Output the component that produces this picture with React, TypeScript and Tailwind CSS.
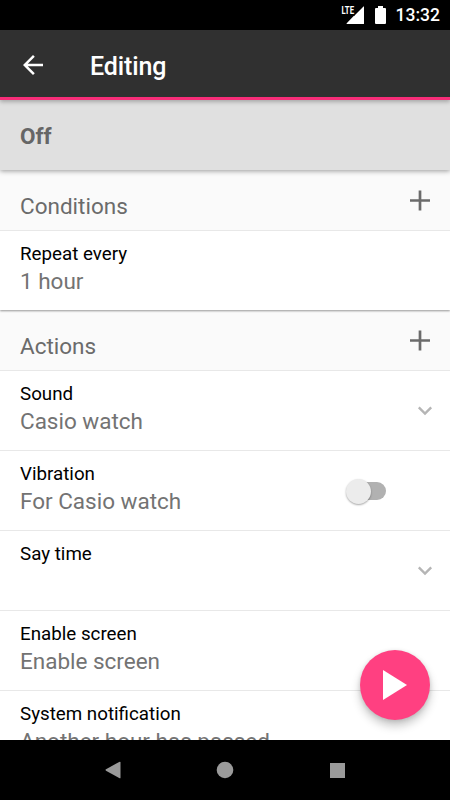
import type { ReactNode } from "react";

type RowProps = {
  title: string;
  summary?: string;
  children?: ReactNode;
};

const NOTIFICATION_TEXT = "Another hour has passed";

function StatusBar() {
  return (
    <div className="flex h-[30px] shrink-0 items-center justify-end bg-black pr-[10px] text-white">
      <svg width="25" height="20" viewBox="0 0 25 20" fill="currentColor">
        <path d="M14 10.500V10l8.500-8.500q.5-.5.5.5v16.500q0 .5-.5.5H6q-1 0-.3-.7l7-7.300z" />
        <text
          x="0.5"
          y="9"
          textLength="12.5"
          lengthAdjust="spacingAndGlyphs"
          className="font-['Roboto'] text-[11.5px] font-bold"
        >
          LTE
        </text>
      </svg>
      <svg
        className="ml-[9px]"
        width="11"
        height="20"
        viewBox="0 0 11 20"
        fill="currentColor"
      >
        <path d="M3 1h5v2h2q1 0 1 1v14q0 1-1 1H1q-1 0-1-1V4q0-1 1-1h2z" />
      </svg>
      <span className="ml-[10px] pt-px text-[17.5px] leading-[29px] font-medium">
        13:32
      </span>
    </div>
  );
}

function Toolbar() {
  return (
    <header className="relative z-20 flex h-[70px] shrink-0 items-center border-b-[3px] border-[#f72d78] bg-[#303030] pt-[3px] pl-[17.5px] text-white shadow-[0_2px_4px_rgba(0,0,0,0.25)]">
      <svg width="30" height="30" viewBox="0 0 24 24" fill="currentColor">
        <path d="M20 11H7.83l5.59-5.59L12 4l-8 8 8 8 1.41-1.41L7.83 13H20z" />
      </svg>
      <h1 className="ml-[42.5px] pt-[3px] text-[25px] leading-[30px] font-medium tracking-[-0.1px]">
        Editing
      </h1>
    </header>
  );
}

function SectionHeader({ title }: { title: string }) {
  return (
    <div className="flex h-[60px] items-center justify-between bg-[#fafafa] px-5">
      <h2 className="pt-3 text-[22.5px] leading-[27px] text-[#6b6b6b]">
        {title}
      </h2>
      <svg
        width="20"
        height="21"
        viewBox="0 0 20 21"
        className="text-[#6b6b6b]"
        stroke="currentColor"
        strokeWidth="2.7"
      >
        <path d="M10 0.500v20M0 10.500h20" />
      </svg>
    </div>
  );
}

function SettingRow({ title, summary, children }: RowProps) {
  return (
    <div className="flex h-20 items-start justify-between border-t border-[#e8e8e8] bg-white pl-5">
      <div className="pt-3">
        <p className="text-[18.75px] leading-[22px] text-black">{title}</p>
        {summary && (
          <p className="mt-[3px] text-[22.5px] leading-[27px] tracking-[-0.01px] whitespace-nowrap text-[#737373]">
            {summary}
          </p>
        )}
      </div>
      {children}
    </div>
  );
}

function Chevron() {
  return (
    <svg
      className="mt-[34px] mr-[17px] text-[#b5b5b5]"
      width="16"
      height="11"
      viewBox="0 0 16 11"
      fill="none"
      stroke="currentColor"
      strokeWidth="2.4"
    >
      <path d="m1.8 2.300 6.2 6.2 6.2-6.2" />
    </svg>
  );
}

function SwitchOff() {
  return (
    <div
      role="switch"
      aria-checked="false"
      className="mt-[27px] mr-16 flex h-[26px] w-10 items-center"
    >
      <span className="relative z-10 h-[25px] w-[25px] shrink-0 rounded-full bg-[#ececec] shadow-[0_1px_2px_rgba(0,0,0,0.35)]" />
      <span className="-ml-[20px] h-[18px] w-[35px] shrink-0 rounded-full bg-[#b1b1b1]" />
    </div>
  );
}

function NavBar() {
  return (
    <nav className="z-20 grid h-[60px] shrink-0 grid-cols-[1fr_112px_1fr] items-center bg-black text-[#9a9a9a]">
      <svg
        className="mr-[48px] ml-auto"
        width="16"
        height="18"
        viewBox="0 0 16 18"
        fill="currentColor"
      >
        <path d="M14.200.9Q15.500.2 15.500 1.500v15q0 1.300-1.300.6L1 9.700q-1-.7 0-1.400z" />
      </svg>
      <svg
        className="mx-auto"
        width="18"
        height="18"
        viewBox="0 0 18 18"
        fill="currentColor"
      >
        <circle cx="9" cy="9" r="8.3" />
      </svg>
      <span className="ml-[49px] h-[15px] w-[15px] bg-[#9a9a9a]" />
    </nav>
  );
}

export default function App() {
  return (
    <div className="relative flex h-[800px] w-[450px] flex-col overflow-hidden bg-white font-['Roboto',sans-serif]">
      <StatusBar />
      <Toolbar />

      <main className="min-h-0 flex-1 overflow-hidden">
        <div className="relative z-10 flex h-[70px] items-center bg-[#e0e0e0] pt-[3px] pl-5 text-[22.5px] font-bold text-[#666] shadow-[0_1px_5px_rgba(0,0,0,0.4)]">
          Off
        </div>
        <section className="relative z-[5] shadow-[0_1px_2px_rgba(0,0,0,0.4)]">
          <SectionHeader title="Conditions" />
          <SettingRow title="Repeat every" summary="1 hour" />
        </section>
        <section>
          <SectionHeader title="Actions" />
          <SettingRow title="Sound" summary="Casio watch">
            <Chevron />
          </SettingRow>
          <SettingRow title="Vibration" summary="For Casio watch">
            <SwitchOff />
          </SettingRow>
          <SettingRow title="Say time">
            <Chevron />
          </SettingRow>
          <SettingRow title="Enable screen" summary="Enable screen" />
          <SettingRow title="System notification" summary={NOTIFICATION_TEXT} />
        </section>
      </main>

      <button
        aria-label="Play"
        className="absolute right-5 bottom-20 z-10 flex h-[70px] w-[70px] items-center justify-center rounded-full bg-[#ff4081] shadow-[0_6px_10px_rgba(0,0,0,0.22),0_1px_4px_rgba(0,0,0,0.12)]"
      >
        <svg width="24" height="30" viewBox="0 0 24 30" fill="white">
          <path d="M0 0v30l24-15z" />
        </svg>
      </button>

      <NavBar />
    </div>
  );
}
